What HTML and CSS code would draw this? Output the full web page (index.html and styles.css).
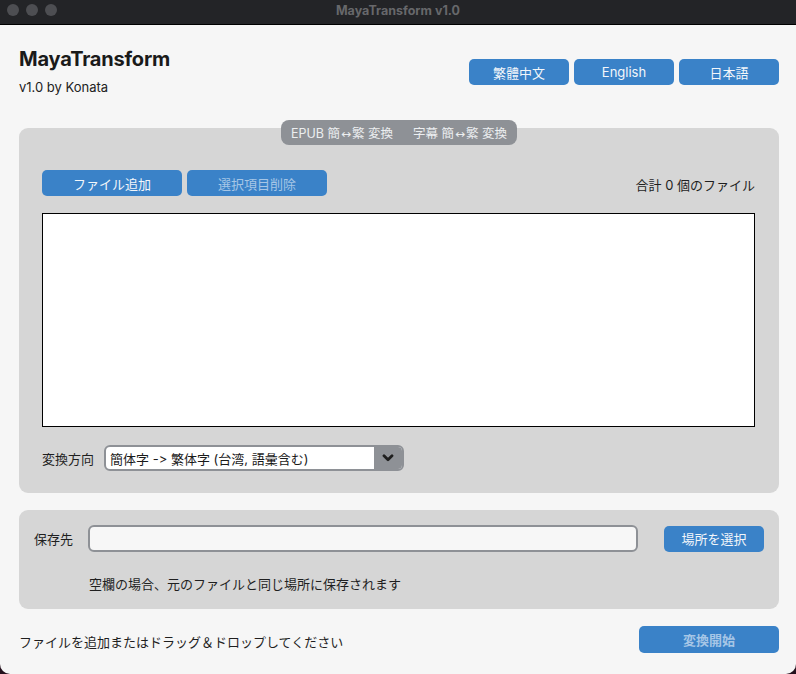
FILE: index.html
```html
<!DOCTYPE html>
<html lang="ja">
<head>
<meta charset="utf-8">
<title>MayaTransform v1.0</title>
<link rel="stylesheet" href="styles.css">
</head>
<body>
<div class="app">
  <div class="titlebar">
    <div class="lights"><span class="light"></span><span class="light"></span><span class="light"></span></div>
    <div class="wintitle">MayaTransform v1.0</div>
  </div>
  <div class="content">
    <header class="header">
      <div class="brand">
        <div class="name">MayaTransform</div>
        <div class="ver">v1.0 by Konata</div>
      </div>
      <div class="langs">
        <button class="btn lang">繁體中文</button>
        <button class="btn lang">English</button>
        <button class="btn lang">日本語</button>
      </div>
    </header>

    <div class="tabs">
      <span class="tab">EPUB 簡<span class="arr">↔</span>繁 変換</span>
      <span class="tab">字幕 簡<span class="arr">↔</span>繁 変換</span>
    </div>
    <section class="panel main">
      <div class="toolbar">
        <div class="tools">
          <button class="btn wide">ファイル追加</button>
          <button class="btn wide disabled">選択項目削除</button>
        </div>
        <div class="count">合計 0 個のファイル</div>
      </div>
      <div class="list"></div>
      <div class="dirrow">
        <span class="label">変換方向</span>
        <div class="select">
          <span class="seltext">簡体字 -&gt; 繁体字 (台湾, 語彙含む)</span>
          <span class="selarrow"><svg width="12" height="8" viewBox="0 0 12 8"><path d="M2 1.8 L6 5.8 L10 1.8" fill="none" stroke="#1e1e1e" stroke-width="2.8" stroke-linecap="round" stroke-linejoin="round"/></svg></span>
        </div>
      </div>
    </section>

    <section class="panel save">
      <div class="saverow">
        <span class="label">保存先</span>
        <div class="input"></div>
        <button class="btn pick">場所を選択</button>
      </div>
      <div class="hint">空欄の場合、元のファイルと同じ場所に保存されます</div>
    </section>

    <footer class="footer">
      <span class="status">ファイルを追加またはドラッグ＆ドロップしてください</span>
      <button class="btn wide disabled start">変換開始</button>
    </footer>
  </div>
</div>
</body>
</html>
```

FILE: styles.css
```css
html, body {
  margin: 0;
  padding: 0;
  background: #24101c;
}
body {
  font-family: "Inter", "Noto Sans CJK JP", sans-serif;
  font-size: 13px;
  color: #1d1d1d;
  width: 796px;
  height: 674px;
  overflow: hidden;
  font-variant-ligatures: none;
  font-feature-settings: "calt" 0, "liga" 0;
}
.app {
  width: 796px;
  height: 674px;
  display: flex;
  flex-direction: column;
  background: #f6f6f6;
  border-radius: 0 0 10px 10px;
  overflow: hidden;
}
.titlebar {
  height: 24px;
  background: #232427;
  border-bottom: 1px solid #000;
  display: flex;
  align-items: center;
  justify-content: center;
  position: relative;
  flex-shrink: 0;
}
.lights {
  position: absolute;
  left: 7px;
  top: 4px;
  display: flex;
  gap: 7px;
}
.light {
  width: 12px;
  height: 12px;
  border-radius: 50%;
  background: #4d4e52;
}
.wintitle {
  font-family: "Inter", sans-serif;
  font-weight: 700;
  font-size: 12.5px;
  color: #67686b;
  margin-top: -4px;
}
.content {
  flex: 1;
  display: flex;
  flex-direction: column;
  padding: 0 17px 0 19px;
}
.header {
  display: flex;
  justify-content: space-between;
  align-items: flex-start;
  padding-top: 22px;
  height: 73px;
}
.name {
  font-size: 20px;
  font-weight: 700;
  letter-spacing: -0.2px;
  line-height: 24px;
  color: #1a1a1a;
}
.ver {
  margin-top: 8px;
  font-size: 13px;
  line-height: 16px;
  color: #222;
}
.langs {
  display: flex;
  gap: 5px;
  margin-top: 12px;
}
.btn {
  font-family: "Inter", "Noto Sans CJK JP", sans-serif;
  font-size: 13px;
  border: none;
  border-radius: 5px;
  background: #3a82c8;
  color: #f2f6fa;
  height: 26px;
  padding: 0;
  cursor: default;
  font-variant-ligatures: none;
}
.btn.lang {
  width: 100px;
}
.btn.wide {
  width: 140px;
}
.btn.disabled {
  color: #a6c6e6;
}
.tabs {
  align-self: center;
  display: flex;
  gap: 20px;
  background: #8e9196;
  border-radius: 8px;
  height: 25px;
  padding: 0 10px;
  align-items: center;
  margin-bottom: -17px;
  position: relative;
  z-index: 1;
  color: #eceef0;
  font-size: 12.5px;
}
.arr {
  font-family: "DejaVu Sans", sans-serif;
  font-size: 12px;
  margin: 0 1px;
}
.panel {
  background: #d6d6d6;
  border-radius: 9px;
}
.main {
  padding: 42px 24px 22px 23px;
  display: flex;
  flex-direction: column;
}
.toolbar {
  display: flex;
  justify-content: space-between;
  align-items: center;
  height: 26px;
}
.tools {
  display: flex;
  gap: 5px;
}
.count {
  font-size: 13px;
  color: #1f1f1f;
  padding-top: 2px;
}
.list {
  margin-top: 17px;
  height: 212px;
  background: #fff;
  border: 1px solid #000;
}
.dirrow {
  margin-top: 18px;
  display: flex;
  align-items: center;
  height: 26px;
}
.label {
  font-size: 13px;
  color: #1f1f1f;
}
.dirrow .label {
  width: 62px;
}
.select {
  width: 300px;
  height: 26px;
  box-sizing: border-box;
  border: 2px solid #8e9196;
  border-radius: 6px;
  background: #fff;
  display: flex;
  align-items: center;
  overflow: hidden;
}
.seltext {
  flex: 1;
  padding-left: 4px;
  font-size: 13px;
  color: #1a1a1a;
}
.selarrow {
  width: 28px;
  height: 100%;
  background: #8e9196;
  display: flex;
  align-items: center;
  justify-content: center;
}
.save {
  margin-top: 17px;
  padding: 15px 15px 0 15px;
  height: 99px;
  box-sizing: border-box;
}
.saverow {
  display: flex;
  align-items: center;
  height: 27px;
}
.saverow .label {
  width: 54px;
}
.input {
  flex: 1;
  height: 27px;
  box-sizing: border-box;
  border: 2px solid #8e9196;
  border-radius: 6px;
  background: #f7f7f7;
  margin-right: 26px;
}
.btn.pick {
  width: 100px;
}
.hint {
  margin-top: 22px;
  padding-left: 55px;
  font-size: 13px;
  color: #1f1f1f;
}
.footer {
  margin-top: 17px;
  display: flex;
  justify-content: space-between;
  align-items: center;
  height: 27px;
}
.status {
  font-size: 13px;
  color: #1f1f1f;
  padding-top: 3px;
}
.start {
  height: 27px;
  font-weight: 700;
}
```
